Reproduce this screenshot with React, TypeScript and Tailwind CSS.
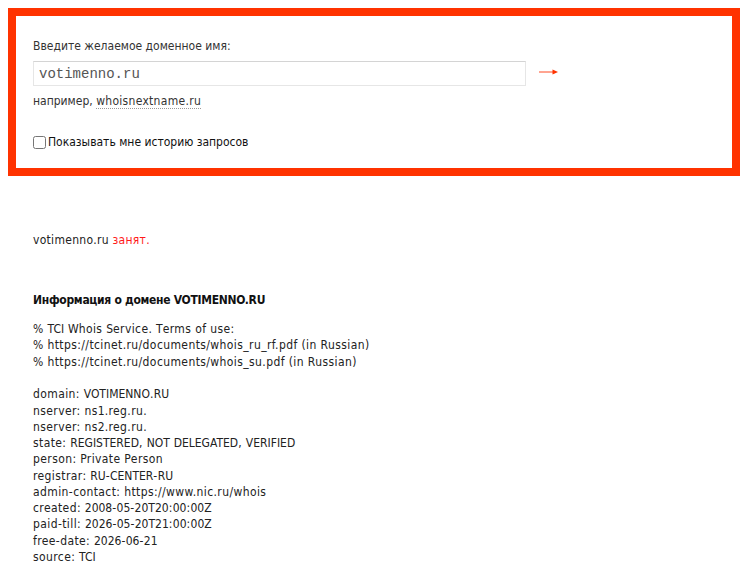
import React from "react";

const whois1 = [
  "% TCI Whois Service. Terms of use:",
  "% https://tcinet.ru/documents/whois_ru_rf.pdf (in Russian)",
  "% https://tcinet.ru/documents/whois_su.pdf (in Russian)",
];
const whois2 = [
  "domain: VOTIMENNO.RU",
  "nserver: ns1.reg.ru.",
  "nserver: ns2.reg.ru.",
  "state: REGISTERED, NOT DELEGATED, VERIFIED",
  "person: Private Person",
  "registrar: RU-CENTER-RU",
  "admin-contact: https://www.nic.ru/whois",
  "created: 2008-05-20T20:00:00Z",
  "paid-till: 2026-05-20T21:00:00Z",
  "free-date: 2026-06-21",
  "source: TCI",
];

function Line({ text }: { text: string }) {
  const parts = text.split(/([A-Z0-9]+)/).filter((p) => p.length > 0);
  return (
    <div>
      {parts.map((p, i) =>
        /^[A-Z0-9]+$/.test(p) ? (
          <span key={i}>{p}</span>
        ) : (
          <span key={i} className="tracking-[0.4px]">
            {p}
          </span>
        )
      )}
    </div>
  );
}

export default function App() {
  return (
    <div className="min-h-[564px] w-[749px] overflow-hidden bg-white font-['DejaVu_Sans_Condensed','DejaVu_Sans',sans-serif] text-[12px] leading-[16px] text-[#222]">
      <div className="ml-2 mt-2 w-[732px] border-8 border-[#ff3300] pb-[18px] pl-[17px] pt-[22px]">
        <div className="text-[#333]">Введите желаемое доменное имя:</div>
        <div className="mt-[7px] flex items-center">
          <div className="flex h-[25px] w-[493px] items-center border border-[#e6e6e6] border-t-[#d4d4d4] bg-white pl-[5px] font-['Liberation_Mono',monospace] text-[14px] text-[#555]">
            votimenno.ru
          </div>
          <svg className="ml-[13px] -mt-[3px]" width="20" height="10" viewBox="0 0 20 10">
            <line x1="0" y1="5" x2="16" y2="5" stroke="#ff4a22" strokeWidth="1" />
            <polygon points="13.5,2.5 19,5 13.5,7.5" fill="#ff3300" />
          </svg>
        </div>
        <div className="mt-[7px] text-[#333]">
          например,{" "}
          <span className="border-b border-dotted border-[#999] tracking-[0.3px]">whoisnextname.ru</span>
        </div>
        <label className="mt-[25px] flex items-center text-[#111]">
          <input type="checkbox" className="m-0 h-[13px] w-[13px]" />
          <span className="ml-[2px]">Показывать мне историю запросов</span>
        </label>
      </div>

      <div className="pl-[33px]">
        <div className="mt-[56px] tracking-[0.3px]">
          votimenno.ru <span className="text-[#ff1a1a]">занят.</span>
        </div>
        <div className="mt-[44px] font-bold tracking-[-0.3px] text-[#111]">Информация о домене VOTIMENNO.RU</div>
        <div className="mt-[13px] leading-[16.25px]">
          {whois1.map((l) => (
            <Line key={l} text={l} />
          ))}
          <div className="h-[16.5px]" />
          {whois2.map((l) => (
            <Line key={l} text={l} />
          ))}
        </div>
      </div>
    </div>
  );
}
